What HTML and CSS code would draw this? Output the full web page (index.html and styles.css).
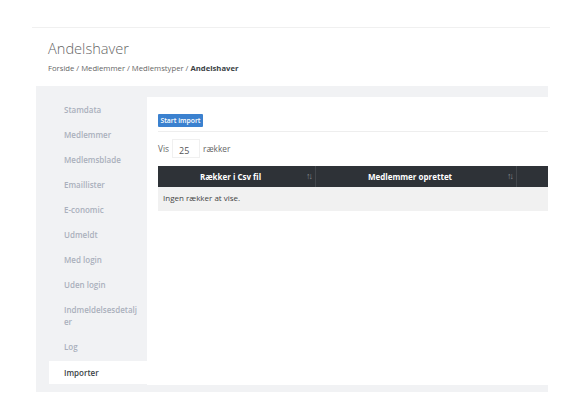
FILE: index.html
```html
<!DOCTYPE html>
<html lang="da">
<head>
<meta charset="utf-8">
<title>Andelshaver</title>
<link rel="stylesheet" href="styles.css">
</head>
<body>
<div class="topbar"></div>
<header class="page-header">
  <h1 class="title">Andelshaver</h1>
  <nav class="crumbs">Forside / Medlemmer / Medlemstyper / <b>Andelshaver</b></nav>
</header>
<section class="panel">
  <ul class="sidenav">
    <li>Stamdata</li>
    <li>Medlemmer</li>
    <li>Medlemsblade</li>
    <li>Emaillister</li>
    <li>E-conomic</li>
    <li>Udmeldt</li>
    <li>Med login</li>
    <li>Uden login</li>
    <li>Indmeldelsesdetaljer</li>
    <li>Log</li>
    <li class="active">Importer</li>
  </ul>
  <div class="content">
    <div class="toolbar"><button class="btn">Start import</button></div>
    <div class="length">Vis <span class="input">25</span> rækker</div>
    <div class="table">
      <div class="thead">
        <div class="th c1">Rækker i Csv fil<span class="sort">↑↓</span></div>
        <div class="th c2">Medlemmer oprettet<span class="sort">↑↓</span></div>
        <div class="th c3"></div>
      </div>
      <div class="empty">Ingen rækker at vise.</div>
    </div>
  </div>
</section>
</body>
</html>
```
FILE: styles.css
```css
* { box-sizing: border-box; }
body {
  margin: 0;
  font-family: "Open Sans", "Noto Sans", sans-serif;
  background: #fff;
  color: #555;
}
.topbar {
  height: 28px;
  margin: 0 34px 0 32px;
  border-bottom: 1px solid #f0f0f0;
}
.page-header {
  padding: 10px 0 0 48px;
  height: 58px;
}
.title {
  margin: 0;
  font-size: 14.6px;
  font-weight: 300;
  line-height: 20px;
  color: #666;
}
.crumbs {
  margin-top: 4px;
  font-size: 7.7px;
  line-height: 12px;
  color: #666;
}
.crumbs b { color: #3a3f45; font-weight: 700; }
.panel {
  display: flex;
  margin-left: 36px;
  width: 512px;
  background: #f1f2f4;
  padding: 11px 0 7px 13px;
}
.sidenav {
  list-style: none;
  margin: 0;
  padding: 0;
  width: 98px;
  font-size: 8px;
  font-weight: 600;
  color: #aab0bc;
}
.sidenav li {
  padding: 6.5px 9px 6.5px 15px;
  line-height: 12px;
  word-break: break-all;
}
.sidenav li.active {
  background: #fff;
  color: #3a3f45;
  padding-top: 5.5px;
  padding-bottom: 5.5px;
  margin-top: 2px;
}
.content {
  flex: 1;
  background: #fff;
  padding: 17px 0 0 11px;
  height: 288px;
}
.toolbar {
  border-bottom: 1px solid #eeeeee;
  padding-bottom: 4px;
}
.btn {
  display: block;
  border: 0;
  background: #3b81cf;
  color: #fff;
  font-family: inherit;
  font-size: 6.8px;
  font-weight: 600;
  height: 13px;
  width: 45px;
  padding: 0;
  border-radius: 1px;
  line-height: 13px;
  text-align: center;
}
.length {
  display: flex;
  align-items: center;
  margin-top: 7px;
  font-size: 8.3px;
  color: #666;
}
.input {
  display: inline-block;
  width: 28px;
  height: 19px;
  line-height: 21px;
  margin: 0 3px 0 3px;
  padding-left: 6px;
  border: 1px solid #f0f0f0;
  font-size: 9px;
  color: #555;
}
.table {
  margin-top: 8px;
}
.thead {
  display: flex;
  background: #2e3237;
  height: 21px;
  color: #fff;
  font-size: 8px;
  font-weight: 700;
}
.th {
  position: relative;
  display: flex;
  align-items: center;
  justify-content: center;
  padding-right: 12px;
  border-right: 1px solid #43474c;
}
.c1 { width: 158px; }
.c2 { width: 201px; }
.c3 { flex: 1; border-right: 0; }
.sort {
  position: absolute;
  right: 4px;
  top: 4px;
  font-size: 9px;
  line-height: 12px;
  font-weight: 400;
  color: #85898e;
  letter-spacing: -2px;
}
.empty {
  background: #f1f1f1;
  height: 24px;
  line-height: 22px;
  padding-left: 5px;
  font-size: 8px;
  color: #444;
}
```
